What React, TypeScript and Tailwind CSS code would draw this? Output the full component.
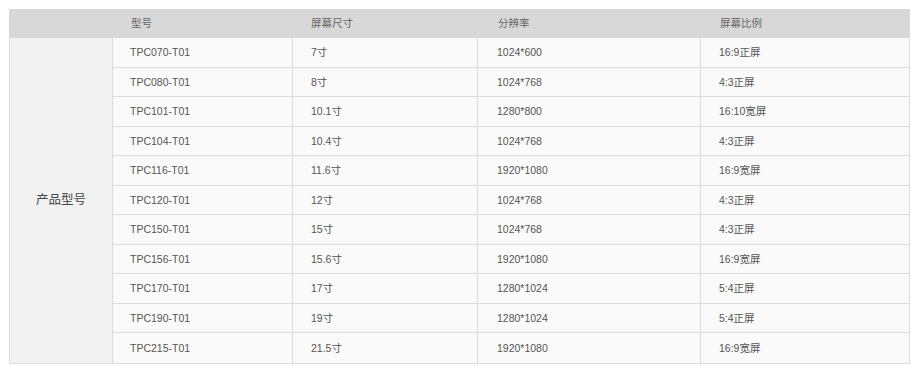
import React from "react";

const rows = [
  ["TPC070-T01", "7寸", "1024*600", "16:9正屏"],
  ["TPC080-T01", "8寸", "1024*768", "4:3正屏"],
  ["TPC101-T01", "10.1寸", "1280*800", "16:10宽屏"],
  ["TPC104-T01", "10.4寸", "1024*768", "4:3正屏"],
  ["TPC116-T01", "11.6寸", "1920*1080", "16:9宽屏"],
  ["TPC120-T01", "12寸", "1024*768", "4:3正屏"],
  ["TPC150-T01", "15寸", "1024*768", "4:3正屏"],
  ["TPC156-T01", "15.6寸", "1920*1080", "16:9宽屏"],
  ["TPC170-T01", "17寸", "1280*1024", "5:4正屏"],
  ["TPC190-T01", "19寸", "1280*1024", "5:4正屏"],
  ["TPC215-T01", "21.5寸", "1920*1080", "16:9宽屏"],
];

const cols = "grid-cols-[104px_180px_185px_223px_209px]";
// left padding per data column
const pads = ["pl-[17px]", "pl-[18px]", "pl-[19px]", "pl-[18px]"];

const App = () => {
  return (
    <div className="bg-white w-[919px] h-[374px] pt-[9px] pl-[9px] font-['Liberation_Sans','Noto_Sans_CJK_SC',sans-serif] text-[10.5px] text-[#555]">
      <div className="w-[901px]">
        <div className={`grid ${cols} h-[29px] pt-[1px] bg-[#d8d8d8] text-[#666] items-center`}>
          <div />
          <div className="pl-[18px]">型号</div>
          <div className="pl-[18px]">屏幕尺寸</div>
          <div className="pl-[20px]">分辨率</div>
          <div className="pl-[19px]">屏幕比例</div>
        </div>

        <div className={`grid ${cols} grid-rows-[repeat(11,29.5px)] border-b border-[#dcdcdc] bg-[#fafafa]`}>
          <div className="row-span-11 col-start-1 row-start-1 flex items-center justify-center bg-[#f2f2f2] border-l border-r border-[#dcdcdc] text-[12.5px] text-[#444]">
            产品型号
          </div>
          {rows.map((r, i) =>
            r.map((c, j) => (
              <div
                key={`${i}-${j}`}
                className={`flex items-center pt-[2px] ${pads[j]} border-r border-[#dcdcdc] ${
                  i < rows.length - 1 ? "border-b" : ""
                }`}
              >
                {c}
              </div>
            ))
          )}
        </div>
      </div>
    </div>
  );
};

export default App;
